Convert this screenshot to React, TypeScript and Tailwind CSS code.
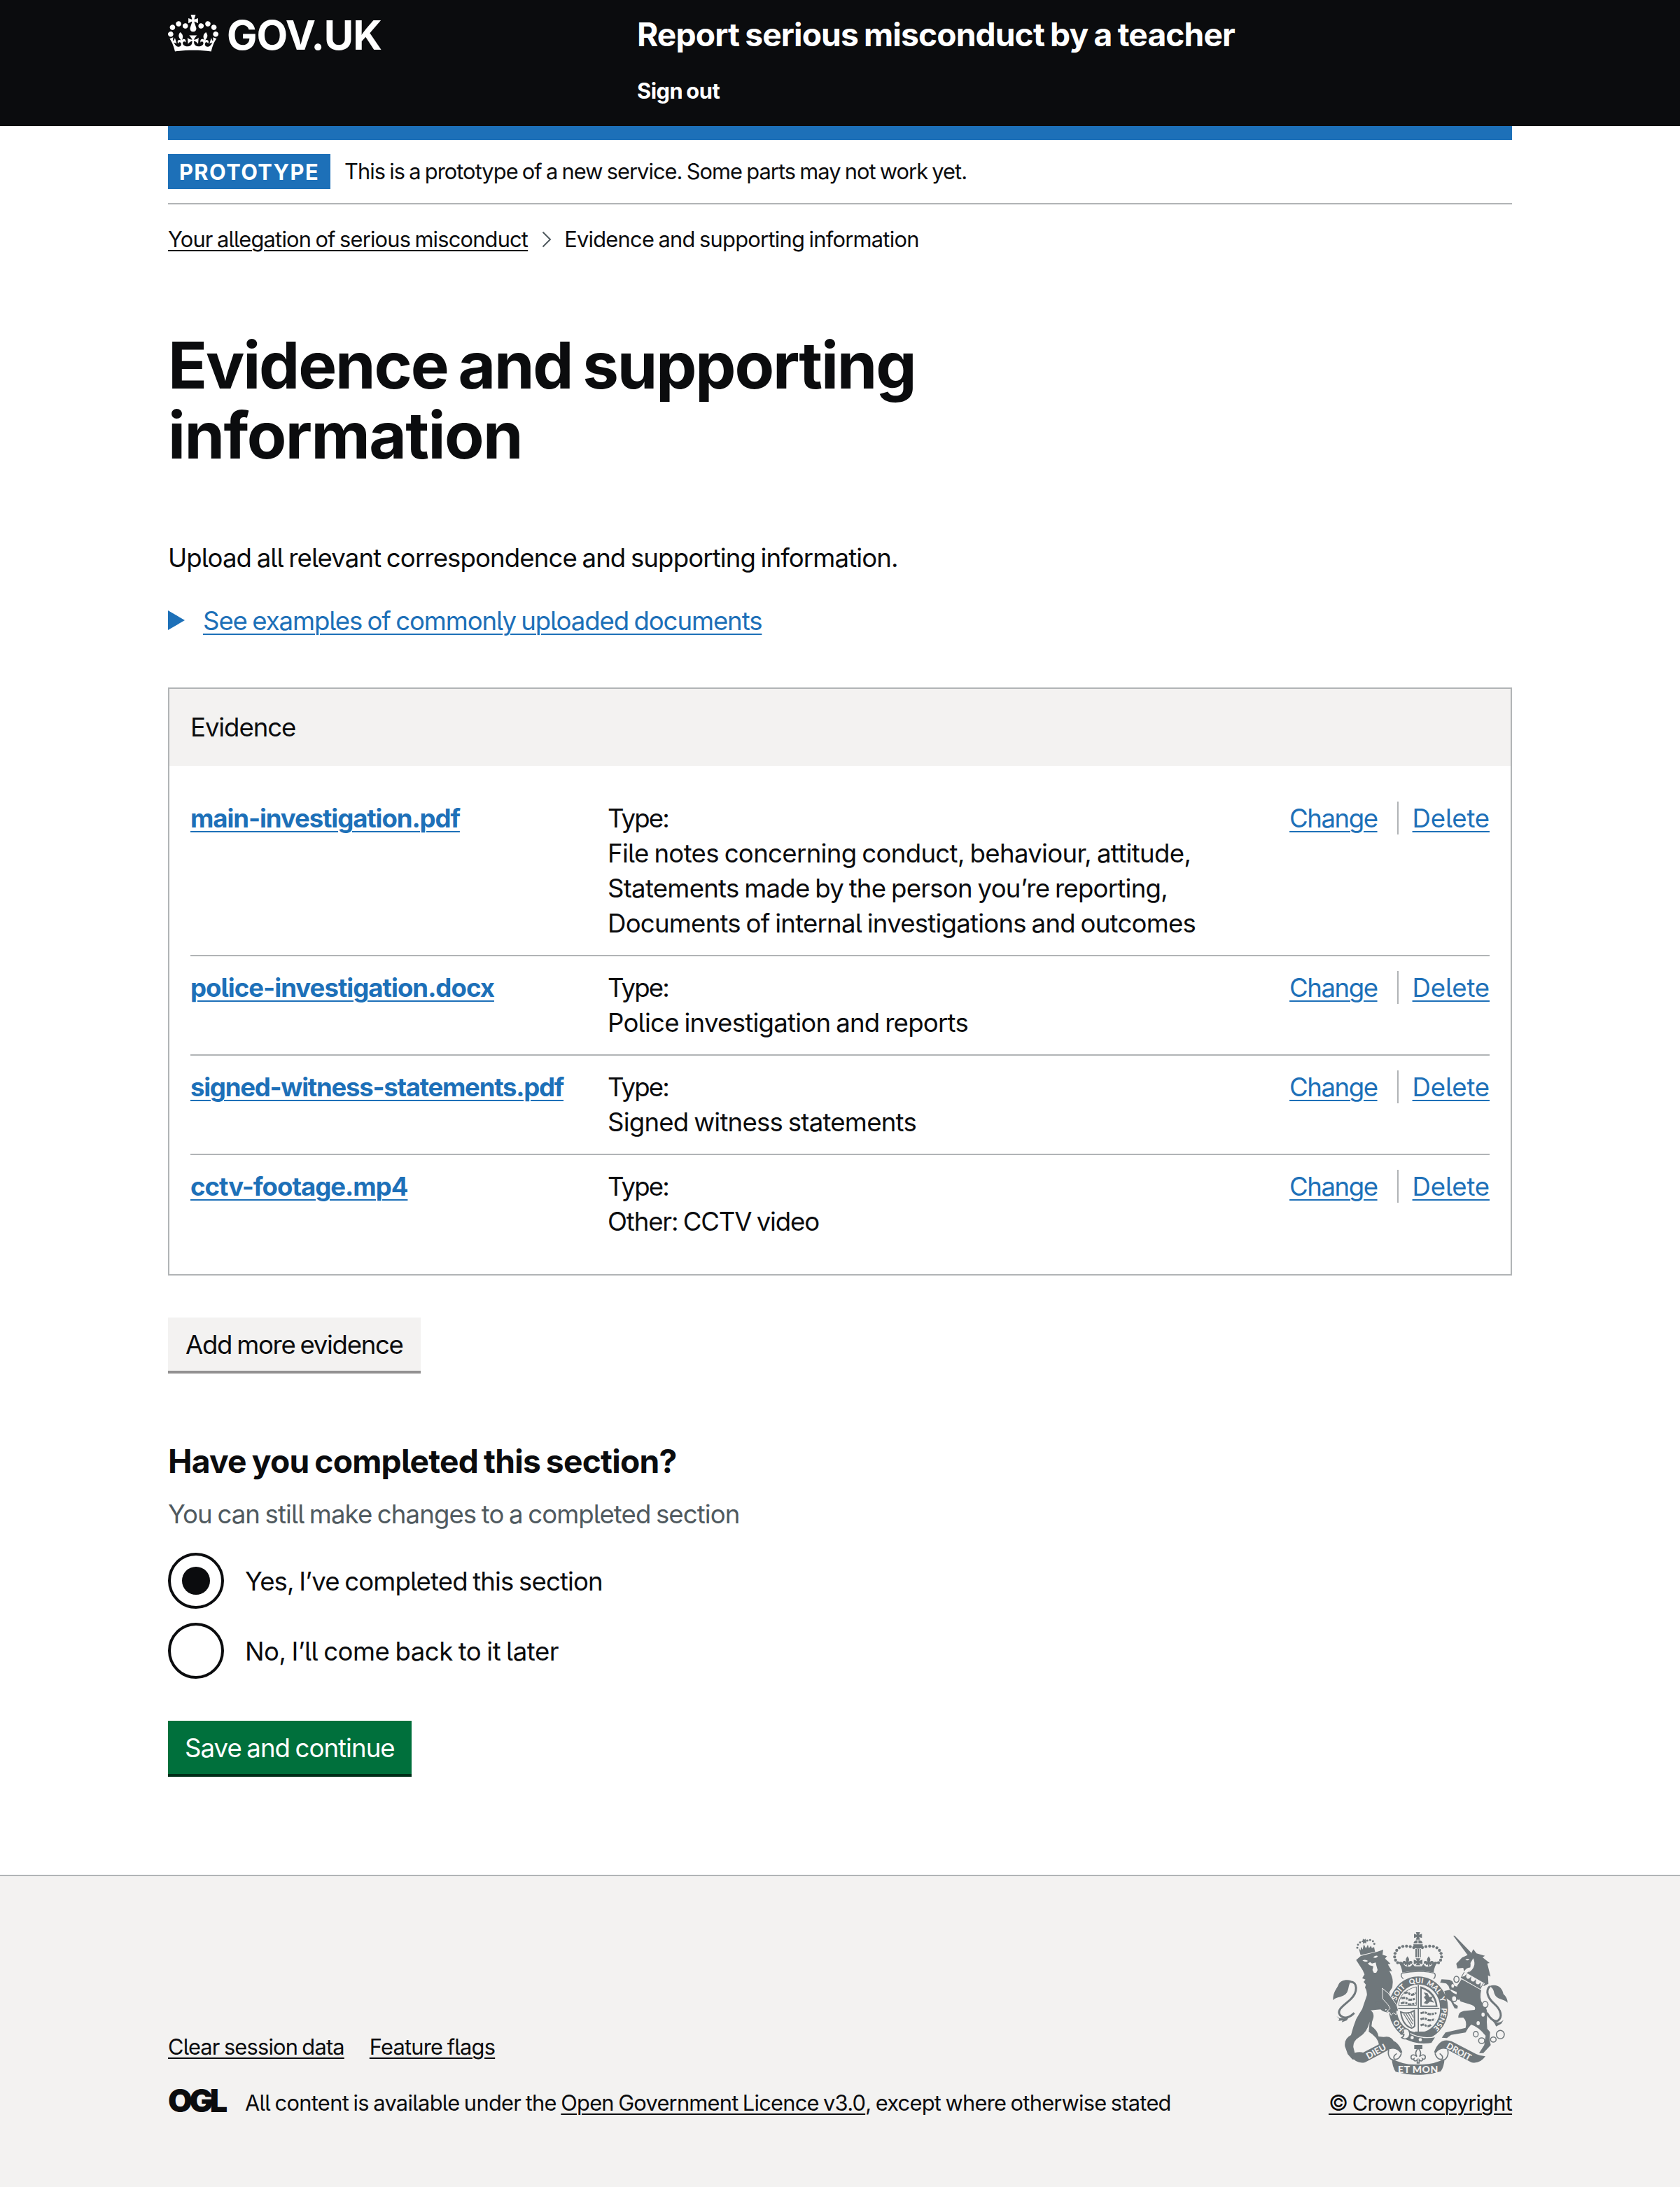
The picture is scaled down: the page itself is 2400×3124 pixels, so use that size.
import React from 'react';

const link = 'underline decoration-2 underline-offset-[5px]';
const smallLink = 'underline decoration-2 underline-offset-[4px]';

function Crown() {
  return (
    <svg viewBox="0 0 132 97" className="h-[53px] w-[72px]" fill="currentColor" aria-hidden="true">
      <path d="M25 30.2c3.5 1.5 7.7-.2 9.1-3.7 1.5-3.6-.2-7.8-3.9-9.2-3.6-1.4-7.6.3-9.1 3.9-1.4 3.5.3 7.5 3.9 9zM9 39.5c3.6 1.5 7.8-.2 9.2-3.7 1.5-3.6-.2-7.8-3.9-9.1-3.6-1.5-7.6.2-9.1 3.8-1.4 3.5.3 7.5 3.8 9zM4.4 57.2c3.5 1.5 7.7-.2 9.1-3.8 1.5-3.6-.2-7.7-3.9-9.1-3.5-1.5-7.6.3-9.1 3.8-1.4 3.5.3 7.6 3.9 9.1zm38.3-21.4c3.5 1.5 7.7-.2 9.1-3.8 1.5-3.6-.2-7.7-3.9-9.1-3.6-1.5-7.6.3-9.1 3.8-1.3 3.6.4 7.7 3.9 9.1zm64.4-5.6c-3.6 1.5-7.8-.2-9.1-3.7-1.5-3.6.2-7.8 3.8-9.2 3.6-1.4 7.7.3 9.2 3.9 1.3 3.5-.4 7.5-3.9 9zm15.9 9.3c-3.6 1.5-7.7-.2-9.1-3.7-1.5-3.6.2-7.8 3.7-9.1 3.6-1.5 7.7.2 9.2 3.8 1.5 3.5-.3 7.5-3.8 9zm4.7 17.7c-3.6 1.5-7.8-.2-9.2-3.8-1.5-3.6.2-7.7 3.9-9.1 3.6-1.5 7.7.3 9.2 3.8 1.3 3.5-.4 7.6-3.9 9.1zM89.3 35.8c-3.6 1.5-7.8-.2-9.2-3.8-1.4-3.6.2-7.7 3.9-9.1 3.6-1.5 7.7.3 9.2 3.8 1.4 3.6-.3 7.7-3.9 9.1zM69.7 17.7l8.9 4.7V9.3l-8.9 2.8c-.2-.3-.5-.6-.9-.9L72.4 0H59.6l3.5 11.2c-.3.3-.6.5-.9.9l-8.8-2.8v13.1l8.8-4.7c.3.3.6.7.9.9l-5 15.4v.1c-.2.8-.4 1.6-.4 2.4 0 4.1 3.1 7.5 7 8.1h.2c.3 0 .7.1 1 .1.4 0 .7 0 1-.1h.2c4-.6 7.1-4.1 7.1-8.1 0-.8-.1-1.7-.4-2.4V34l-5.1-15.4c.4-.2.7-.6 1-.9zM66 92.8c16.9 0 32.8 1.1 47.1 3.2 4-16.9 8.9-26.7 14-33.5l-9.6-3.4c1 4.9 1.1 7.2 0 10.2-1.5-1.4-3-4.3-4.2-8.7L108.6 76c2.8-2 5-3.2 7.5-3.3-4.4 9.4-10 11.9-13.6 11.2-4.3-.8-6.3-4.6-5.6-7.9 1-4.7 5.7-5.9 8-.5 4.3-8.7-3-11.4-7.6-8.8 7.1-7.2 7.9-13.5 2.1-21.1-8 6.1-8.1 12.3-4.5 20.8-4.7-5.4-12.1-2.5-9.5 6.2 3.4-5.2 7.9-2 7.2 3.1-.6 4.3-6.4 7.8-13.5 7.2-10.3-.9-10.9-8-11.2-13.8 2.5-.5 7.1 1.8 11 7.3L80.2 60c-4.1 4.4-8 5.3-12.3 5.4 1.4-4.4 8-11.6 8-11.6H55.5s6.4 7.2 7.9 11.6c-4.2-.1-8-1-12.3-5.4l1.4 16.4c3.9-5.5 8.5-7.7 10.9-7.3-.3 5.8-.9 12.8-11.1 13.8-7.2.6-12.9-2.9-13.5-7.2-.7-5 3.8-8.3 7.1-3.1 2.7-8.7-4.6-11.6-9.4-6.2 3.7-8.5 3.6-14.7-4.6-20.8-5.8 7.6-5 13.9 2.2 21.1-4.7-2.6-11.9.1-7.7 8.8 2.3-5.5 7.1-4.2 8.1.5.7 3.3-1.3 7.1-5.7 7.9-3.5.7-9-1.8-13.5-11.2 2.5.1 4.7 1.3 7.5 3.3l-4.7-15.4c-1.2 4.4-2.7 7.2-4.3 8.7-1.1-3-.9-5.3 0-10.2l-9.5 3.4c5 6.9 9.9 16.7 14 33.5 14.8-2.1 30.8-3.2 47.7-3.2z" />
    </svg>
  );
}

const PAPER = '#f3f2f1';
const INK = '#6f777b';

const archBeads: [number, number][] = [
  [419, 126], [404, 122], [388, 120], [372, 121], [357, 127], [346, 138], [339, 151], [337, 166], [341, 180], [350, 191],
];
const lionBeads: [number, number][] = [
  [177, 127], [180, 114], [189, 104], [220, 96], [232, 94], [244, 99], [250, 110],
];
const chain: [number, number, number, number][] = [
  [602, 262, 11, 13], [592, 345, 11, 13], [725, 370, 12, 13], [685, 497, 10, 12], [710, 525, 13, 12], [760, 520, 12, 11], [790, 499, 17, 18],
];
const motto: [string, string][] = [
  ['HO', '14%'], ['SOIT', '35.5%'], ['QUI', '48.6%'], ['MAL', '60.3%'], ['Y', '69.3%'], ['PENSE', '82%'],
];

function Fleur({ x, y, s }: { x: number; y: number; s: number }) {
  return (
    <path
      transform={`translate(${x} ${y}) scale(${s})`}
      d="M0-24C8-14 10-8 4 2c8-8 18-6 18 2 0 6-5 8-9 5 2 6-5 10-10 3v10h-6V12c-5 7-12 3-10-3-4 3-9 1-9-5 0-8 10-10 18-2-6-10-4-16 4-26z"
    />
  );
}

function RoyalArms() {
  return (
    <svg viewBox="72 60 750 612" className="mx-auto h-[204px] w-[250px]" fill={INK} aria-label="Royal coat of arms">
      {/* imperial crown */}
      <path d="M428 60h18l-4 11 12-4v18l-12-4 4 11h-18l4-11-12 4V67l12 4z" />
      <path d="M418 108a20 16 0 0 1 17-14v14zM439 94a20 16 0 0 1 18 14h-18zM417 112h41l-2 14q-18 10-37 0z" />
      {archBeads.map(([x, y]) => (
        <React.Fragment key={x}>
          <circle cx={x} cy={y} r="6.4" />
          <circle cx={875 - x} cy={y} r="6.4" />
        </React.Fragment>
      ))}
      <path d="M426 132h6v36h-6zM435 132h6v36h-6zM444 132h5v36h-5z" />
      <path d="M427 172h21l-6 11 14-5v20l-14-5 6 9h-21l6-9-14 5v-20l14 5z" />
      <path d="M353 190q16-8 22 6 8 14 20 12 14 2 18-12l10 10h30l8-10q6 14 18 12 14 2 20-12 6-14 23-6-14 12-18 43-66-16-134 0-4-30-17-43z" />
      <Fleur x={392} y={186} s={0.95} />
      <Fleur x={483} y={186} s={0.95} />
      <path d="M368 236q70-16 140 0 8 12-4 24M368 236q-8 12 6 24" fill="none" stroke={INK} strokeWidth="4" />

      {/* garter and shield */}
      <ellipse cx="439" cy="387" rx="132" ry="142" fill={PAPER} />
      <ellipse cx="439" cy="387" rx="110" ry="120" fill="none" stroke={INK} strokeWidth="34" />
      <path id="garter" d="M439 496A99 109 0 0 1 439 278A99 109 0 0 1 439 496" fill="none" />
      {motto.map(([word, at]) => (
        <text key={word} fill={PAPER} fontFamily="Lato" fontWeight="900" fontSize="31" textAnchor="middle">
          <textPath href="#garter" startOffset={at}>{word}</textPath>
        </text>
      ))}
      <path d="M354 374q4-62 76-80v80z" fill="none" stroke={INK} strokeWidth="3" />
      <g fill="none" stroke={INK} strokeWidth="9" strokeDasharray="16 3 9 4">
        <path d="M378 322q12-8 22 2t28-4M366 344q16-6 26 2t36-2M364 366q16-8 26 0t38-2" />
        <path d="M448 408q16-8 28 0t40-2M448 434q16-8 28 0t34-2M448 460q12-8 22 0t24-4" />
      </g>
      <path d="M447 292q68 18 74 88h-74zM453 302v72h60q-8-52-60-72z" fillRule="evenodd" />
      <path d="M462 318l16 4 8 16 16-2-8 12 14 14-20-4-12 10-14-4 10-12-10-14 8-6z" />
      <path d="M363 402q30 12 58-6l2 66q-10 12-16 8-36-12-44-68z" fill="none" stroke={INK} strokeWidth="6" />
      <path d="M376 410l34 54M386 410l28 44M396 408l20 34M406 404l12 22" stroke={INK} strokeWidth="3.5" />
      <path d="M436 286h5v204h-5zM349 385h180v5H349zM424 486h38v12h-38z" />
      <path d="M374 474q60 50 140 34l-18 28q-66 12-126-22z" stroke={PAPER} strokeWidth="4" />
      <circle cx="412" cy="512" r="7" fill={PAPER} />
      <circle cx="447" cy="521" r="7" fill={PAPER} />
      <path d="M371 478q16-10 26 2 12 20-4 34-14 8-26-2 10-4 10-14l-12-2 10-6q2-6-4-12z" fill={PAPER} stroke={INK} strokeWidth="5" />

      {/* lion */}
      <g>
        {lionBeads.map(([x, y]) => (
          <circle key={x} cx={x} cy={y} r="4.4" />
        ))}
        <path d="M201 88l6 4 6-4 0 7 6 1-4 6 1 6-8-2-6 4-1-7-7-2 6-5z" />
        <path d="M183 128l8 10 2-16 7 12 5-22 9 18 8-16 5 14 9-10 3 10 10-4 4 20-62 14z" />
        <path d="M172 179l20-17 70-18 26-9-3 22 19 6-8 10 23 22-11 3 18 30-12-2q16 28 15 49l-2 22-13 20 2 12-28-22 36 56 12 24-22 12-12-8-14-4-10 4-24 2-20 2q16 10 12 32-8 18-8 36 26 18 30 44l22 2q34-8 46 24l-8 10-12-10-2 10-14-12-10 10-6-6-14 8q-4-32-44-56l4-44q-10 46-46 68-26 16-24 42l6 24q34-10 52 10l-4 16-14-8-2 12-18-10-6 8-18 0-20-22-12-34q-4-34 26-48 10-38 22-68 12-22 26-44l20-58q2-20-8-34l4-12-10-12 8-10-14-6 10-16-8-18z" />
        <path d="M252 358l14-2 18 6 2 20 8-6 4 20 8-6 4 14q-28-2-38-20z" />
        <path d="M284 300l26 22 36 50 8 26-8 0-2 16-12-8-10 10-6-12-12-4 14-14-10-16-22-24z" stroke={PAPER} strokeWidth="3" />
        <path d="M199 181q12-6 24 2-10 8-24-2zM245 168q10-10 20-6-4 12-20 6zM222 194l10-6 8 6 16-4 2 10 6 22-6 12h-10l-6-12 4-16-16-4z" fill={PAPER} />
        <path d="M146 272c34 0 34 46 2 76-28 26-60 44-46 66 18 22 44 10 62-8" fill="none" stroke={INK} strokeWidth="9" />
        <path d="M150 268c-20-8-48 0-54 18-6 16-24 30-23 66 12-18 46-10 60-34 8-16 6-32 17-50zM88 420l12 8 20 2 24-10-12 18-22 8 4-8-18 2 4-8z" />
      </g>

      {/* unicorn */}
      <g>
        <path d="M588 75l7 1 72 74-16 10z" />
        <path d="M666 150l8-17 14 18 36 10-10 7 30 24-10 2 14 56-11-5 2 36-20 10-92-52q34-4 38-28-22 0-30 18l-4-16-25 2-5-20 25-26z" />
        <path d="M640 178q8-6 18-2-8 8-18 2zM674 172q16 36-18 60 8-26 6-40z" fill={PAPER} />
        <path d="M624 262l84 46q-8 34 4 56 22 18 22 46-4 34 0 64l12 14-2 34 5 22-32 34h-18l22-34 6-40q-30-38-62-48-16 16-24 34l-62 10-18 14-22-2 16-22 86-20q8-28-10-44l-21 1q-2-28 32-30l38-4q8-14-14-22l-46-14q-26-28-14-68z" />
        <g transform="translate(632 234) rotate(30)">
          <path d="M-3-6H102V26H-3z" fill={PAPER} />
          <path d="M0 18H98V24H0zM0-4H3V20H0zM95-4H98V20H95zM3 18l8-8 3-12 5 12 8 4 6-4 4-14 5 14 8 4 7-4 4-14 5 14 8 4 7-4 4-12 5 12 5 8z" />
        </g>
        <path d="M614 296l-12 30q-28-8-34-36l-10-10-26-4 6-14 34 2 12 6 10 20zM612 320l-34-14-28 6 6 30 22 14 16 30 12 2 2-12-16-10-12-24 32 8z" />
        <ellipse cx="716" cy="413" rx="7" ry="9" fill={PAPER} />
        <ellipse cx="695" cy="450" rx="7" ry="9" fill={PAPER} />
        <ellipse cx="586" cy="290" rx="6" ry="8" fill={PAPER} />
        {chain.map(([x, y, rx, ry]) => (
          <ellipse key={x} cx={x} cy={y} rx={rx} ry={ry} fill={PAPER} stroke={INK} strokeWidth="4.5" />
        ))}
        <path d="M745 292c-20 18-10 50 20 76 30 27 34 55 16 70-14 10-36-8-49-33" fill="none" stroke={INK} strokeWidth="9" />
        <path d="M743 291c32-12 56 6 60 34 12 10 18 24 18 37-16-16-46-12-56-37-4-14-4-24-22-34zM746 432q20 0 28 14 16 4 30-10l-10 16-22 12q-8-20-26-32z" />
      </g>

      {/* badge and scroll */}
      <path d="M421 543h35v18h-35z" />
      <g fill="none" stroke={INK} strokeWidth="3.5">
        <Fleur x={438} y={590} s={1.4} />
      </g>
      <path d="M150 592q24-2 40-10l104-54q52-20 76 46l-6 6q-20-28-48-18l-106 56q-36 8-60-26zM726 592q-24-2-40-10l-104-54q-52-20-76 46l6 6q20-28 48-18l106 56q36 8 60-26z" />
      <path d="M312 564q-8 26 14 44M366 580q-10 30-30 24-8-12 10-24M564 564q8 26-14 44M510 580q10 30 30 24 8-12-10-24" fill="none" stroke={INK} strokeWidth="5" />
      <path d="M325 602q50 28 112 25 66 2 114-25-2 34-16 54-92 30-194 2-14-22-16-56z" />
      <g fill={PAPER} fontFamily="Lato" fontWeight="900" textAnchor="middle">
        <text fontSize="38" transform="translate(264 583) rotate(-29)">DIEU</text>
        <text fontSize="37" transform="translate(606 583) rotate(29)">DROIT</text>
        <text fontSize="42" x="437" y="662" textLength="172">ET MON</text>
      </g>
    </svg>
  );
}

const files = [
  { name: 'main-investigation.pdf', track: 'tracking-[-0.03em]', lines: [
    ['File notes concerning conduct, behaviour, attitude,', 'tracking-[-0.0183em]'],
    ['Statements made by the person you’re reporting,', 'tracking-[-0.0205em]'],
    ['Documents of internal investigations and outcomes', 'tracking-[-0.0209em]'],
  ] },
  { name: 'police-investigation.docx', track: 'tracking-[-0.027em]', lines: [['Police investigation and reports', 'tracking-[-0.0203em]']] },
  { name: 'signed-witness-statements.pdf', track: 'tracking-[-0.0347em]', lines: [['Signed witness statements', 'tracking-[-0.021em]']] },
  { name: 'cctv-footage.mp4', track: 'tracking-[-0.0276em]', lines: [['Other: CCTV video', 'tracking-[-0.0313em]']] },
];

export default function App() {
  return (
    <div className="flex min-h-[3124px] w-[2400px] flex-col bg-white font-['Inter','Liberation_Sans',sans-serif] text-[36.6px] leading-[50px] text-[#0b0c0e] [font-feature-settings:'cv05']">
      <header className="h-[180px] bg-[#0b0c0e] px-[240px] text-white [word-spacing:-0.05em]">
        <div className="flex font-bold">
          <a className="flex w-[670px] pt-[21px]">
            <Crown />
            <span className="ml-[12px] text-[58px] leading-[58px] tracking-[-0.018em]">GOV.UK</span>
          </a>
          <div className="pt-[19px]">
            <div className="text-[46.2px] leading-[60px] tracking-[-0.0194em]">Report serious misconduct by a teacher</div>
            <div className="mt-[31px] text-[30.8px] leading-[40px] tracking-[-0.015em]">Sign out</div>
          </div>
        </div>
      </header>

      <div className="mx-[240px] border-t-[20px] border-[#1d70b8]">
        <div className="flex h-[92px] items-center gap-[20px] border-b-2 border-[#b1b4b6] text-[30.8px] leading-[40px]">
          <strong className="h-[50px] w-[232px] bg-[#1d70b8] pl-[16px] leading-[52px] tracking-[0.046em] text-white">PROTOTYPE</strong>
          <span className="tracking-[-0.0307em] [word-spacing:-0.05em]">This is a prototype of a new service. Some parts may not work yet.</span>
        </div>
        <nav className="mt-[30px] flex items-center text-[30.8px] leading-[40px]">
          <a className={`tracking-[-0.0259em] [word-spacing:-0.05em] ${smallLink}`}>Your allegation of serious misconduct</a>
          <svg viewBox="0 0 14 24" className="ml-[20px] mr-[18px] h-[24px] w-[14px]" fill="none" stroke="#505a5f" strokeWidth="2">
            <path d="M1.5 1.5L12 12L1.5 22.5" />
          </svg>
          <span className="tracking-[-0.0237em] [word-spacing:-0.05em]">Evidence and supporting information</span>
        </nav>

        <h1 className="mt-[109px] text-[92.4px] font-bold leading-[100px] tracking-[-0.0232em] [word-spacing:-0.053em]">
          Evidence and supporting
          <br />
          <span className="tracking-[-0.017em]">information</span>
        </h1>

        <p className="mt-[101px] tracking-[-0.0242em] [word-spacing:-0.05em]">Upload all relevant correspondence and supporting information.</p>

        <div className="mt-[40px] flex items-start text-[#1d70b8]">
          <svg viewBox="0 0 24 28" className="mr-[26px] mt-[10px] h-[28px] w-[24px]" fill="currentColor">
            <path d="M0 0L24 14L0 28z" />
          </svg>
          <a className={`tracking-[-0.0297em] [word-spacing:-0.05em] ${link}`}>See examples of commonly uploaded documents</a>
        </div>

        <section className="mt-[70px] border-2 border-[#b1b4b6]">
          <h2 className="h-[110px] bg-[#f3f2f1] px-[30px] pt-[30px] tracking-[-0.03em]">Evidence</h2>
          <dl className="px-[30px] py-[30px]">
            {files.map((f) => (
              <div key={f.name} className="flex border-b-2 border-[#b1b4b6] py-[20px] last:border-b-0">
                <dt className={`w-[596px] font-bold text-[#1d70b8] ${f.track}`}><a className={link}>{f.name}</a></dt>
                <dd className="flex-1 whitespace-nowrap [word-spacing:-0.05em]">
                  <div className="tracking-[-0.05em]">Type:</div>
                  {f.lines.map(([text, track]) => (
                    <div key={text} className={track}>{text}</div>
                  ))}
                </dd>
                <dd className="flex items-start text-[#1d70b8]">
                  <a className={`tracking-[-0.04em] ${link}`}>Change</a>
                  <span className="ml-[28px] mr-[20px] mt-px h-[47px] w-[2px] bg-[#b1b4b6]" />
                  <a className={`tracking-[-0.005em] ${link}`}>Delete</a>
                </dd>
              </div>
            ))}
          </dl>
        </section>

        <button className="mt-[60px] block h-[76px] w-[361px] whitespace-nowrap bg-[#f3f2f1] pl-[25px] pt-[2px] text-left leading-[38px] tracking-[-0.0361em] shadow-[0_4px_0_#929191] [word-spacing:-0.05em]">Add more evidence</button>

        <h2 className="mt-[99px] text-[46.2px] font-bold leading-[60px] tracking-[-0.0167em] [word-spacing:-0.05em]">Have you completed this section?</h2>
        <p className="mt-[21px] tracking-[-0.025em] text-[#505a5f] [word-spacing:-0.05em]">You can still make changes to a completed section</p>

        <div className="mt-[30px] flex flex-col gap-[20px] [word-spacing:-0.05em]">
          <label className="flex h-[80px] items-center gap-[30px]">
            <span className="flex size-[80px] items-center justify-center rounded-full border-4 border-[#0b0c0e]">
              <span className="size-[40px] rounded-full bg-[#0b0c0e]" />
            </span>
            <span className="pt-px tracking-[-0.0243em]">Yes, I’ve completed this section</span>
          </label>
          <label className="flex h-[80px] items-center gap-[30px]">
            <span className="size-[80px] rounded-full border-4 border-[#0b0c0e]" />
            <span className="pt-px tracking-[-0.0131em]">No, I’ll come back to it later</span>
          </label>
        </div>

        <button className="mt-[60px] block h-[76px] w-[348px] whitespace-nowrap bg-[#00703c] pl-[24px] pt-[2px] text-left leading-[38px] tracking-[-0.0261em] text-white shadow-[0_4px_0_#002d18] [word-spacing:-0.05em]">Save and continue</button>
      </div>

      <footer className="mt-[144px] flex h-[446px] items-start justify-between border-t-2 border-[#b1b4b6] bg-[#f3f2f1] px-[240px] text-[30.8px] leading-[40px] [word-spacing:-0.05em]">
        <div className="pt-[224px]">
          <div className="flex gap-[36px]">
            <a className={`tracking-[-0.0264em] ${smallLink}`}>Clear session data</a>
            <a className={`tracking-[-0.0247em] ${smallLink}`}>Feature flags</a>
          </div>
          <div className="mt-[40px] flex">
            <span className="w-[110px] text-[45px] font-black leading-[33px] tracking-[-0.1em]">OGL</span>
            <p className="whitespace-nowrap">
              <span className="tracking-[-0.0223em]">All content is available under the </span>
              <a className={`tracking-[-0.0248em] ${smallLink}`}>Open Government Licence v3.0</a>
              <span className="tracking-[-0.0239em]">, except where otherwise stated</span>
            </p>
          </div>
        </div>
        <div className="w-[262px] pt-[80px]">
          <RoyalArms />
          <a className={`mt-[20px] block whitespace-nowrap tracking-[-0.0259em] ${smallLink}`}>© Crown copyright</a>
        </div>
      </footer>
    </div>
  );
}
